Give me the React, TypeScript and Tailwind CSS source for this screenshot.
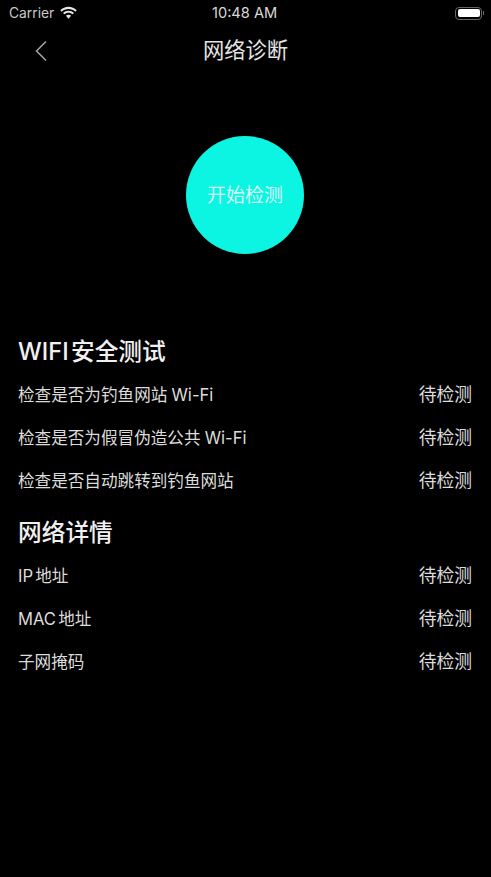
const FONT = '"Inter", "Noto Sans CJK SC", sans-serif';

const wifiRows = ['检查是否为钓鱼网站 Wi-Fi', '检查是否为假冒伪造公共 Wi-Fi', '检查是否自动跳转到钓鱼网站'];
const netRows = ['IP 地址', 'MAC 地址', '子网掩码'];

function Row({ label, tight }: { label: string; tight?: boolean }) {
  return (
    <div className="flex h-[43px] items-center justify-between pl-[18px] pr-[19px]">
      <span className={`text-[16.6px] text-[#dcdcdc] ${tight ? '[word-spacing:-2.5px]' : '[word-spacing:-0.5px]'}`}>{label}</span>
      <span className="text-[17.8px] text-[#dcdcdc]">待检测</span>
    </div>
  );
}

export default function App() {
  return (
    <div className="h-[877px] w-[491px] overflow-hidden bg-black text-white" style={{ fontFamily: FONT }}>
      {/* status bar */}
      <div className="relative flex h-[26px] items-center justify-between pl-[9px] pr-[7px]">
        <div className="flex items-center gap-[5px]">
          <span className="text-[13.8px] text-[#c8c8c8]">Carrier</span>
          <svg className="mb-[1px]" width="19" height="14" viewBox="0 0 18 13" fill="#e6e6e6">
            <path d="M9 2.6c2.5 0 4.8 1 6.5 2.6l1.3-1.4C14.7 1.8 12 .6 9 .6S3.3 1.8 1.2 3.8l1.3 1.4C4.2 3.6 6.5 2.6 9 2.6z" />
            <path d="M9 6.3c1.5 0 2.9.6 3.9 1.5l1.3-1.4C12.8 5.1 11 4.3 9 4.3s-3.8.8-5.2 2.1l1.3 1.4c1-.9 2.4-1.5 3.9-1.5z" />
            <path d="M9 8.1c-1 0-1.8.4-2.4.9L9 12l2.4-3c-.6-.5-1.4-.9-2.4-.9z" />
          </svg>
        </div>
        <span className="absolute left-[212px] top-[3px] text-[14.6px] leading-[20px] text-[#d8d8d8]">10:48 AM</span>
        <div className="flex items-center">
          <div className="flex h-[13px] w-[27px] items-center rounded-[4px] border border-[#666] p-[1.5px]">
            <div className="h-full w-full rounded-[2px] bg-white" />
          </div>
          <div className="ml-[1px] h-[4px] w-[1px] bg-[#666]" />
        </div>
      </div>

      {/* nav bar */}
      <div className="relative flex h-[50px] items-center justify-center">
        <svg className="absolute left-[34px] top-[14px]" width="14" height="22" viewBox="0 0 14 22" fill="none" stroke="#a8a8a8" strokeWidth="1.5">
          <path d="M12 1.5 2.5 11 12 20.5" />
        </svg>
        <span className="text-[21.3px] text-[#e4e4e4]">网络诊断</span>
      </div>

      {/* start button */}
      <div className="flex justify-center pr-[1px] pt-[60px]">
        <button className="flex h-[118px] w-[118px] items-center justify-center rounded-full bg-[#0cf5e2] pt-[3px] text-[19px] text-[#d8fbf6]">
          开始检测
        </button>
      </div>

      <div className="pl-[18px] pt-[79px] text-[23.7px] font-medium leading-[38px] text-[#f0f0f0] [word-spacing:-4px]">WIFI 安全测试</div>
      <div className="pt-[3px]">
        {wifiRows.map((r) => (
          <Row key={r} label={r} />
        ))}
      </div>

      <div className="pl-[18px] pt-[11px] text-[23.7px] font-medium leading-[38px] text-[#f0f0f0]">网络详情</div>
      <div className="pt-[3px]">
        {netRows.map((r) => (
          <Row key={r} label={r} tight />
        ))}
      </div>
    </div>
  );
}
